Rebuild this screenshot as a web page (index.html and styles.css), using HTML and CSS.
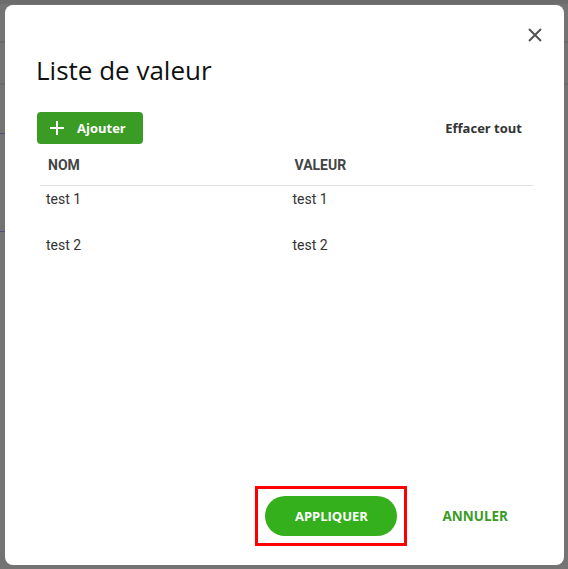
FILE: index.html
```html
<!DOCTYPE html>
<html lang="fr">
<head>
    <meta charset="UTF-8">
    <meta name="viewport" content="width=device-width, initial-scale=1.0">
    <title>Liste de valeur</title>
    <link rel="stylesheet" href="styles.css">
</head>
<body>
    <div class="backdrop">
        <div class="dialog">
            <button class="close" aria-label="Fermer">
                <svg width="14" height="14" viewBox="0 0 14 14">
                    <path d="M1 1 L13 13 M13 1 L1 13" stroke="#555" stroke-width="2" fill="none"/>
                </svg>
            </button>
            <h1 class="title">Liste de valeur</h1>
            <div class="toolbar">
                <button class="btn-add">
                    <svg width="14" height="14" viewBox="0 0 14 14">
                        <path d="M7 0 V14 M0 7 H14" stroke="#fff" stroke-width="2" fill="none"/>
                    </svg>
                    Ajouter
                </button>
                <button class="btn-clear">Effacer tout</button>
            </div>
            <table class="values">
                <thead>
                    <tr>
                        <th>NOM</th>
                        <th>VALEUR</th>
                    </tr>
                </thead>
                <tbody>
                    <tr>
                        <td>test 1</td>
                        <td>test 1</td>
                    </tr>
                    <tr>
                        <td>test 2</td>
                        <td>test 2</td>
                    </tr>
                </tbody>
            </table>
            <div class="footer">
                <div class="highlight">
                    <button class="btn-apply">APPLIQUER</button>
                </div>
                <button class="btn-cancel">ANNULER</button>
            </div>
        </div>
    </div>
</body>
</html>
```

FILE: styles.css
```css
body {
    margin: 0;
    background-color: #747474;
    font-family: "Open Sans", sans-serif;
}
.backdrop {
    padding: 5px 4px 4px 5px;
    height: 560px;
    background:
        linear-gradient(#6c6c6c, #6c6c6c) 0 0 / 100% 4px no-repeat,
        linear-gradient(#6a6a6a, #6a6a6a) 0 41px / 100% 2px no-repeat,
        linear-gradient(#6a6a6a, #6a6a6a) 0 83px / 100% 2px no-repeat,
        linear-gradient(#5a4a80, #5a4a80) 0 133px / 5px 1px no-repeat,
        linear-gradient(#5a4a80, #5a4a80) 0 231px / 5px 1px no-repeat;
}
.dialog {
    position: relative;
    width: 559px;
    height: 560px;
    background: #fff;
    border-radius: 8px;
    display: flex;
    flex-direction: column;
}
button {
    font-family: "Open Sans", sans-serif;
    border: none;
    background: none;
    cursor: pointer;
    padding: 0;
}
.close {
    position: absolute;
    top: 23px;
    right: 22px;
    width: 14px;
    height: 14px;
    display: flex;
}
.title {
    margin: 49px 0 0 0;
    padding-left: 31px;
    font-size: 26px;
    line-height: 32px;
    font-weight: 400;
    color: #111;
}
.toolbar {
    margin-top: 26px;
    padding: 0 42px 0 32px;
    display: flex;
    justify-content: space-between;
    align-items: center;
}
.btn-add {
    display: flex;
    align-items: center;
    gap: 13px;
    height: 32px;
    width: 106px;
    padding-left: 13px;
    background: #3a9b25;
    color: #fff;
    font-size: 13px;
    font-weight: 700;
    border-radius: 4px;
}
.btn-clear {
    font-size: 13px;
    font-weight: 700;
    color: #333;
}
.values {
    margin: 0 31px 0 35px;
    border-collapse: collapse;
    font-family: Roboto, sans-serif;
    table-layout: fixed;
    width: 493px;
}
.values th {
    text-align: left;
    font-size: 14px;
    font-weight: 700;
    color: #444;
    height: 41px;
    padding: 0 8px;
    border-bottom: 1px solid #e0e0e0;
}
.values td {
    font-size: 14px;
    color: #333;
    line-height: 16px;
    padding: 5px 6px 25px;
}
.footer {
    margin-top: auto;
    margin-bottom: 19px;
    padding-right: 56px;
    display: flex;
    justify-content: flex-end;
    align-items: center;
    gap: 35px;
}
.highlight {
    border: 3px solid #ff0000;
    padding: 7px;
}
.btn-apply {
    width: 132px;
    height: 40px;
    border-radius: 20px;
    background: #34b01c;
    color: #fff;
    font-size: 13px;
    font-weight: 700;
}
.btn-cancel {
    color: #3a9b25;
    font-size: 13.5px;
    font-weight: 700;
}
```
